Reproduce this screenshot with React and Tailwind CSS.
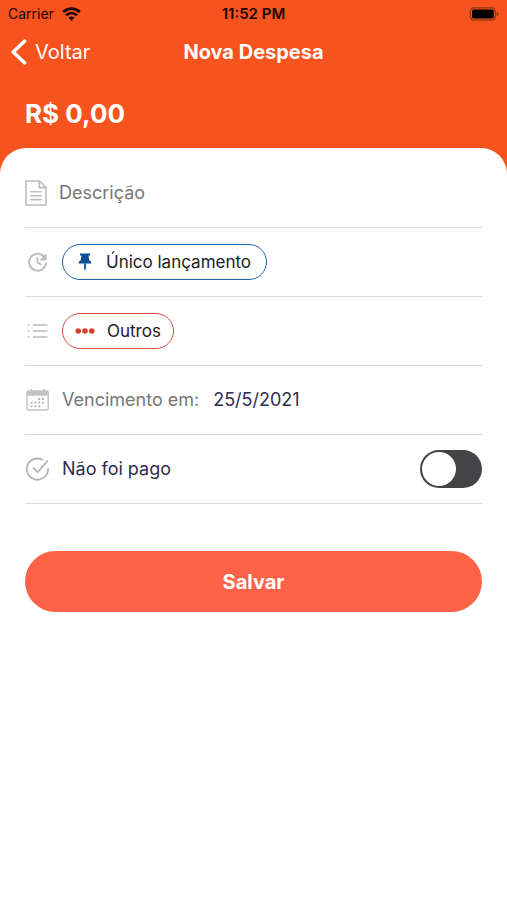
import React, { useState } from 'react';

const WifiIcon = () => (
  <svg width="19" height="14" viewBox="0 0 19 14" fill="none" aria-hidden="true">
    <path d="M1.2 5a11.7 11.7 0 0 1 16.6 0" stroke="#1a0500" strokeWidth="2.8" />
    <path d="M4.1 8.3a7.6 7.6 0 0 1 10.8 0" stroke="#1a0500" strokeWidth="2.6" />
    <path d="M9.5 13.8 6.5 10.8a4.2 4.2 0 0 1 6 0Z" fill="#1a0500" />
  </svg>
);

const BatteryIcon = () => (
  <svg width="30" height="14" viewBox="0 0 30 14" fill="none" aria-hidden="true">
    <rect x="1.4" y="0.8" width="25" height="12.4" rx="3.6" stroke="#000" strokeOpacity="0.4" strokeWidth="1.2" />
    <rect x="3" y="2.6" width="21.8" height="8.8" rx="1.6" fill="#000" />
    <path d="M27.6 4.8c1.3.5 1.9 1.3 1.9 2.2s-.6 1.7-1.9 2.2Z" fill="#000" fillOpacity="0.4" />
  </svg>
);

const BackIcon = () => (
  <svg width="16" height="26" viewBox="0 0 16 26" fill="none" aria-hidden="true">
    <path d="M13.5 2.2 2.2 13l11.3 10.8" stroke="#fff" strokeWidth="3.6" strokeLinecap="round" strokeLinejoin="round" />
  </svg>
);

const DocumentIcon = () => (
  <svg width="22" height="26" viewBox="0 0 22 26" fill="none" stroke="#bdbdbd" strokeWidth="1.6" strokeLinejoin="round" aria-hidden="true">
    <path d="M1 1h13.4L21 7.4V25H1Z" />
    <path d="M14.2 1.2v6.4h6.6" />
    <path d="M5.8 11.8h10.4M5.8 15.7h10.4M5.8 19.6h10.4" strokeLinecap="round" />
  </svg>
);

const ClockIcon = () => (
  <svg width="25" height="24" viewBox="0 0 25 24" fill="none" stroke="#bdbdbd" aria-hidden="true">
    <path d="M18.8 6.6A8.4 8.4 0 1 0 20.9 13" strokeWidth="2" strokeLinecap="round" />
    <path d="M21.2 4v6h-6Z" fill="#bdbdbd" strokeWidth="0.8" strokeLinejoin="round" />
    <path d="M12.4 7.8v4.6l3.4 2" strokeWidth="1.8" strokeLinecap="round" strokeLinejoin="round" />
  </svg>
);

const ListIcon = () => (
  <svg width="25" height="24" viewBox="0 0 25 24" fill="none" stroke="#bdbdbd" strokeWidth="1.6" strokeLinecap="round" aria-hidden="true">
    <path d="M8.4 6h13.6M8.4 12h13.6M8.4 18h13.6" />
    <path d="M3.2 6h.6M3.2 12h.6M3.2 18h.6" />
  </svg>
);

const CalendarIcon = () => (
  <svg width="25" height="24" viewBox="0 0 25 24" fill="none" aria-hidden="true">
    <rect x="2" y="3" width="21.2" height="19" rx="1.6" stroke="#c4c4c4" strokeWidth="1.4" />
    <path d="M2 3h21.2v4.8H2Z" fill="#c4c4c4" />
    <path d="M6.4 1.6v3M18.8 1.6v3" stroke="#c4c4c4" strokeWidth="1.8" strokeLinecap="round" />
    <path
      d="M13.2 11h2M17 11h2M5.6 14.6h2M9.4 14.6h2M13.2 14.6h2M17 14.6h2M5.6 18.4h2M9.4 18.4h2M13.2 18.4h2"
      stroke="#b5b5b5"
      strokeWidth="1.8"
    />
  </svg>
);

const CheckIcon = () => (
  <svg width="25" height="24" viewBox="0 0 25 24" fill="none" stroke="#b5b5b5" strokeWidth="1.8" strokeLinecap="round" strokeLinejoin="round" aria-hidden="true">
    <path d="M17 2.6A10.6 10.6 0 1 0 23 12" />
    <path d="m8.4 11.2 4.4 4L22.4 4" />
  </svg>
);

const PinIcon = () => (
  <svg width="14" height="18" viewBox="0 0 14 18" fill="#0b4f94" aria-hidden="true">
    <path d="M2 .6h10v1.8h-1.4l.6 4.8c1.3.7 2.2 1.8 2.2 3.2H.6c0-1.4.9-2.5 2.2-3.2l.6-4.8H2Z" />
    <path d="M6.1 10.4h1.8v5.4L7 17.6l-.9-1.8Z" />
  </svg>
);

const DotsIcon = () => (
  <svg width="20" height="6" viewBox="0 0 20 6" fill="#d8402f" aria-hidden="true">
    <circle cx="3.2" cy="3" r="2.8" />
    <circle cx="10" cy="3" r="2.8" />
    <circle cx="16.8" cy="3" r="2.8" />
  </svg>
);

const Row = ({ children }) => (
  <div className="flex h-[69px] items-center border-b border-[#dcdcdc]">{children}</div>
);

const App = () => {
  const [description, setDescription] = useState('');
  const [dueDate, setDueDate] = useState('25/5/2021');
  const [paid, setPaid] = useState(false);

  return (
    <div className="min-h-screen bg-white font-[Inter,sans-serif] text-[17px] leading-6">
      <header className="bg-[#f6531e] pb-8">
        {/* Status bar */}
        <div className="grid h-7 grid-cols-3 items-center px-2 text-sm text-[#1a0500]">
          <div className="flex items-center gap-2">
            <span>Carrier</span>
            <WifiIcon />
          </div>
          <span className="text-center text-[15px] font-semibold">11:52 PM</span>
          <div className="flex justify-end">
            <BatteryIcon />
          </div>
        </div>

        <nav className="grid h-12 grid-cols-[1fr_auto_1fr] items-center px-[11px] text-xl text-white">
          <button type="button" className="flex items-center gap-2">
            <BackIcon />
            Voltar
          </button>
          <h1 className="font-bold">Nova Despesa</h1>
        </nav>

        <p className="px-[25px] pt-[22px] pb-[18px] text-[26px] leading-8 font-bold text-white">R$ 0,00</p>
      </header>

      <form className="-mt-8 rounded-t-[26px] bg-white px-[25px] pt-[11px]" onSubmit={(e) => e.preventDefault()}>
        <Row>
          <label htmlFor="description" aria-label="Descrição">
            <DocumentIcon />
          </label>
          <input
            id="description"
            type="text"
            placeholder="Descrição"
            value={description}
            onChange={(e) => setDescription(e.target.value)}
            className="ml-3 min-w-0 flex-1 text-lg text-[#2f2e50] outline-none placeholder:text-[#777777]"
          />
        </Row>

        <Row>
          <ClockIcon />
          <button type="button" className="ml-3 flex h-9 items-center gap-[14px] rounded-full border border-[#1f62a5] px-[15px] text-[#1c1c1c]">
            <PinIcon />
            Único lançamento
          </button>
        </Row>

        <Row>
          <ListIcon />
          <button type="button" className="ml-3 flex h-9 items-center gap-3 rounded-full border border-[#dc4b3e] px-3 text-[#1c1c1c]">
            <DotsIcon />
            Outros
          </button>
        </Row>

        <Row>
          <CalendarIcon />
          <label htmlFor="due-date" className="ml-3 text-lg text-[#777777]">
            Vencimento em:
          </label>
          <input
            id="due-date"
            type="text"
            value={dueDate}
            onChange={(e) => setDueDate(e.target.value)}
            className="ml-[14px] min-w-0 flex-1 text-lg text-[#2f2e50] outline-none"
          />
        </Row>

        <Row>
          <CheckIcon />
          <label htmlFor="paid" className="ml-3 flex-1 text-lg text-[#2f2e50]">
            {paid ? 'Foi pago' : 'Não foi pago'}
          </label>
          <input
            id="paid"
            type="checkbox"
            role="switch"
            checked={paid}
            onChange={(e) => setPaid(e.target.checked)}
            className="h-[38px] w-[62px] appearance-none rounded-full bg-[#444446] p-[2px] before:block before:size-[34px] before:rounded-full before:bg-white checked:bg-[#ff6347] checked:before:ml-6"
          />
        </Row>

        <button type="submit" className="mt-[47px] h-[61px] w-full rounded-full bg-[#ff6347] text-xl font-bold text-white">
          Salvar
        </button>
      </form>
    </div>
  );
};

export default App;
